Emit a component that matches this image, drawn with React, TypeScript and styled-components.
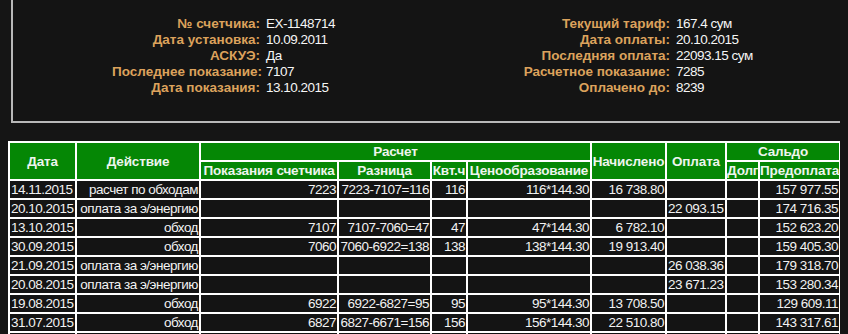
import styled, { createGlobalStyle } from "styled-components";

const GlobalStyle = createGlobalStyle`
    html, body {
        background-color: #151515;
    }
    body {
        margin: 0 8px;
        overflow: hidden;
        font-family: "Liberation Sans", Arial, sans-serif;
        font-size: 13.5px;
        color: #f2f2f2;
    }
`;

const meterInfo = [
    ["№ счетчика:", "EX-1148714", "Текущий тариф:", "167.4 сум"],
    ["Дата установка:", "10.09.2011", "Дата оплаты:", "20.10.2015"],
    ["АСКУЭ:", "Да", "Последняя оплата:", "22093.15 сум"],
    ["Последнее показание:", "7107", "Расчетное показание:", "7285"],
    ["Дата показания:", "13.10.2015", "Оплачено до:", "8239"],
];

type Align = "left" | "right" | "center";

// ширина колонки и выравнивание данных
const columns: { width: number; align: Align }[] = [
    { width: 67, align: "left" },
    { width: 124, align: "right" },
    { width: 138, align: "right" },
    { width: 93, align: "right" },
    { width: 36, align: "right" },
    { width: 124, align: "right" },
    { width: 75, align: "right" },
    { width: 60, align: "left" },
    { width: 33, align: "left" },
    { width: 81, align: "right" },
];

const rows = [
    ["14.11.2015", "расчет по обходам", "7223", "7223-7107=116", "116", "116*144.30", "16 738.80", "", "", "157 977.55"],
    ["20.10.2015", "оплата за э/энергию", "", "", "", "", "", "22 093.15", "", "174 716.35"],
    ["13.10.2015", "обход", "7107", "7107-7060=47", "47", "47*144.30", "6 782.10", "", "", "152 623.20"],
    ["30.09.2015", "обход", "7060", "7060-6922=138", "138", "138*144.30", "19 913.40", "", "", "159 405.30"],
    ["21.09.2015", "оплата за э/энергию", "", "", "", "", "", "26 038.36", "", "179 318.70"],
    ["20.08.2015", "оплата за э/энергию", "", "", "", "", "", "23 671.23", "", "153 280.34"],
    ["19.08.2015", "обход", "6922", "6922-6827=95", "95", "95*144.30", "13 708.50", "", "", "129 609.11"],
    ["31.07.2015", "обход", "6827", "6827-6671=156", "156", "156*144.30", "22 510.80", "", "", "143 317.61"],
    ["30.06.2015", "обход", "6671", "6671-6540=131", "131", "131*144.30", "18 903.30", "", "", "120 806.81"],
];

export default function App() {
    return (
        <>
            <GlobalStyle />
            <InfoPanel>
                <InfoGrid>
                    {meterInfo.map((row, index) => (
                        <InfoRow key={index}>
                            <Label>{row[0]}</Label>
                            <Value>{row[1]}</Value>
                            <Label>{row[2]}</Label>
                            <Value>{row[3]}</Value>
                        </InfoRow>
                    ))}
                </InfoGrid>
            </InfoPanel>

            <HistoryTable>
                <colgroup>
                    {columns.map((col, index) => (
                        <col key={index} style={{ width: col.width }} />
                    ))}
                </colgroup>
                <thead>
                    <tr>
                        <HeadCell rowSpan={2}>Дата</HeadCell>
                        <HeadCell rowSpan={2}>Действие</HeadCell>
                        <HeadCell colSpan={4}>Расчет</HeadCell>
                        <HeadCell rowSpan={2}>Начислено</HeadCell>
                        <HeadCell rowSpan={2}>Оплата</HeadCell>
                        <HeadCell colSpan={2}>Сальдо</HeadCell>
                    </tr>
                    <tr>
                        <HeadCell>Показания счетчика</HeadCell>
                        <HeadCell>Разница</HeadCell>
                        <HeadCell>Квт.ч</HeadCell>
                        <HeadCell>Ценообразование</HeadCell>
                        <HeadCell>Долг</HeadCell>
                        <HeadCell>Предоплата</HeadCell>
                    </tr>
                </thead>
                <tbody>
                    {rows.map((row, index) => (
                        <tr key={index}>
                            {row.map((value, i) => (
                                <Cell key={i} $align={columns[i].align}>
                                    {value}
                                </Cell>
                            ))}
                        </tr>
                    ))}
                </tbody>
            </HistoryTable>
        </>
    );
}

const InfoPanel = styled.section`
    box-sizing: border-box;
    width: 834px;
    margin-left: 3px;
    padding: 16px 0 25px 99px;
    background-color: #141414;
    border: 2px solid #b8b8b8;
    border-top: none;
`;

const InfoGrid = styled.div`
    display: grid;
    grid-template-columns: 148px 262px 148px auto;
    line-height: 16px;
`;

const InfoRow = styled.div`
    display: contents;
`;

const Label = styled.span`
    text-align: right;
    font-weight: bold;
    color: #dca25c;
    white-space: nowrap;
`;

const Value = styled.span`
    padding-left: 6px;
    color: #f6f6f6;
    letter-spacing: -0.5px;
    white-space: nowrap;
`;

const HistoryTable = styled.table`
    width: 833px;
    margin-top: 18px;
    table-layout: fixed;
    border-collapse: separate;
    border-spacing: 0;
    border: 1px solid #fff;
`;

const HeadCell = styled.th`
    padding: 0;
    border: 1px solid #fff;
    background-color: #058705;
    color: #eef5ee;
    font-weight: bold;
    line-height: 17px;
    letter-spacing: -0.15px;
    text-align: center;
    vertical-align: middle;
    white-space: nowrap;
    overflow: hidden;
`;

const Cell = styled.td<{ $align: Align }>`
    padding: 0 1px;
    border: 1px solid #fff;
    background-color: #141414;
    color: #f2f2f2;
    line-height: 17px;
    letter-spacing: -0.5px;
    text-align: ${(p) => p.$align};
    white-space: nowrap;
    overflow: hidden;
`;
